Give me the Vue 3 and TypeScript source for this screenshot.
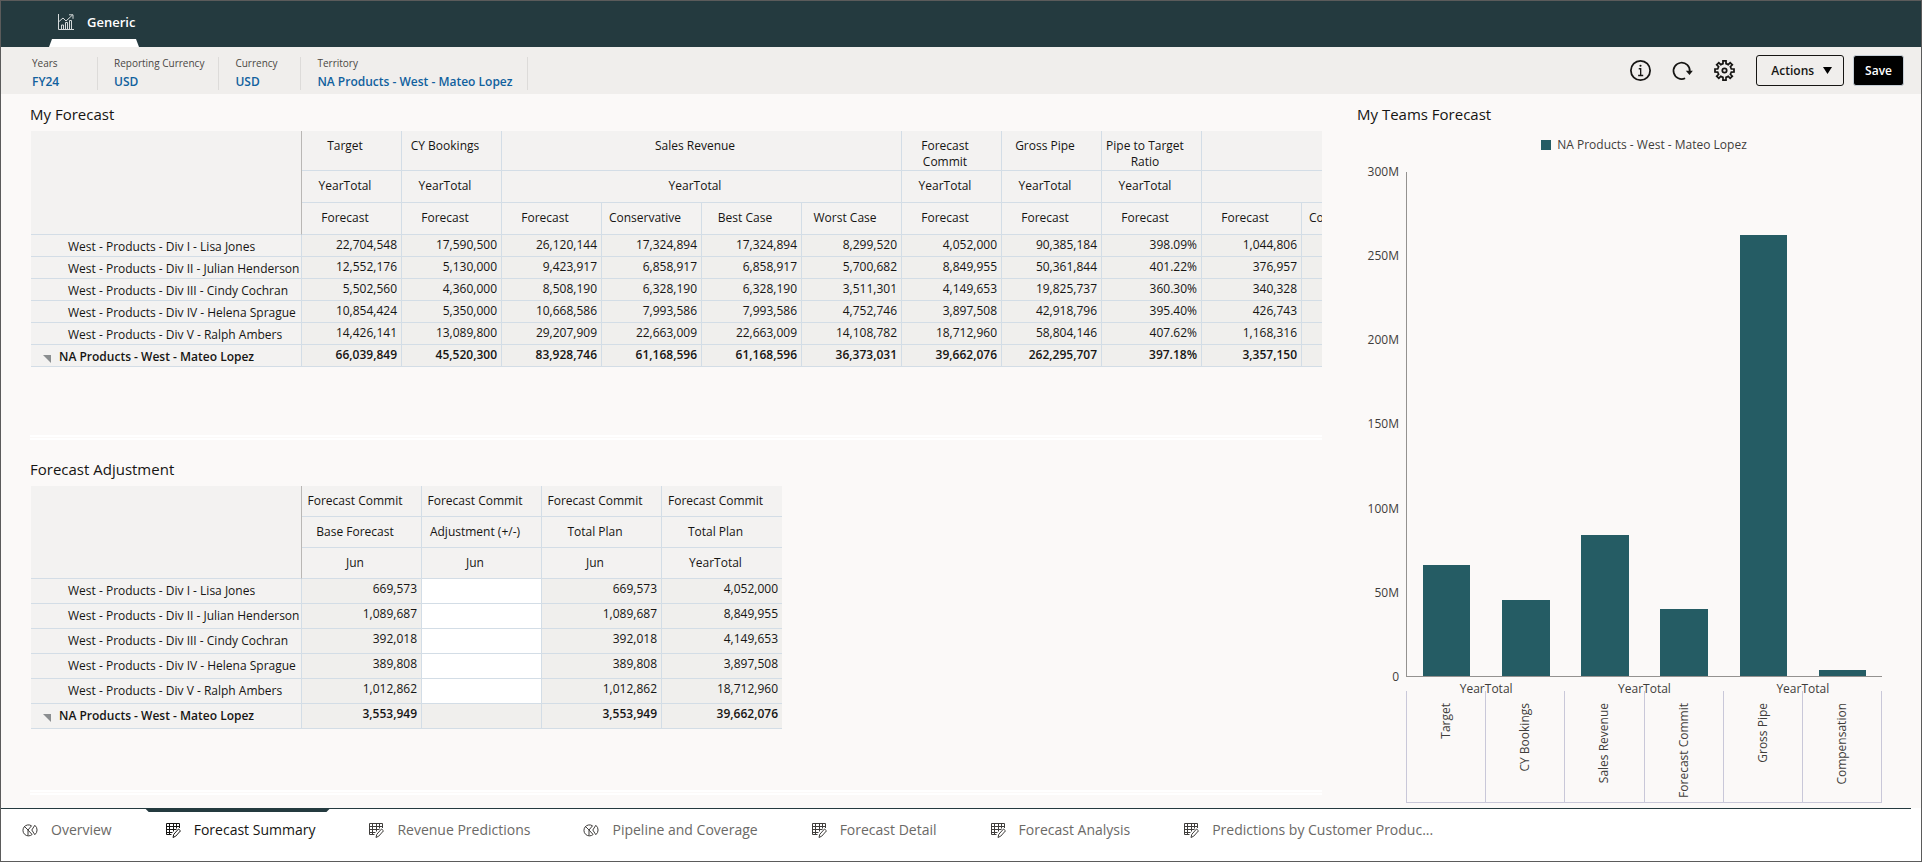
<script setup lang="ts">
import { ref } from 'vue'

interface Head { text: string; span?: number }
interface Row { label: string; values: string[]; total?: boolean }

const pov = [
  { id: 'years', label: 'Years', value: 'FY24' },
  { id: 'reporting', label: 'Reporting Currency', value: 'USD' },
  { id: 'currency', label: 'Currency', value: 'USD' },
  { id: 'territory', label: 'Territory', value: 'NA Products - West - Mateo Lopez' }
]

const forecastHeads: Head[][] = [
  [
    { text: 'Target' }, { text: 'CY Bookings' }, { text: 'Sales Revenue', span: 4 }, { text: 'Forecast Commit' },
    { text: 'Gross Pipe' }, { text: 'Pipe to Target Ratio' }, { text: '', span: 2 }
  ],
  [
    { text: 'YearTotal' }, { text: 'YearTotal' }, { text: 'YearTotal', span: 4 }, { text: 'YearTotal' },
    { text: 'YearTotal' }, { text: 'YearTotal' }, { text: '', span: 2 }
  ],
  ['Forecast', 'Forecast', 'Forecast', 'Conservative', 'Best Case', 'Worst Case', 'Forecast', 'Forecast', 'Forecast', 'Forecast', 'Conservative']
    .map(text => ({ text }))
]

const forecastRows: Row[] = [
  { label: 'West - Products - Div I - Lisa Jones', values: ['22,704,548', '17,590,500', '26,120,144', '17,324,894', '17,324,894', '8,299,520', '4,052,000', '90,385,184', '398.09%', '1,044,806', ''] },
  { label: 'West - Products - Div II - Julian Henderson', values: ['12,552,176', '5,130,000', '9,423,917', '6,858,917', '6,858,917', '5,700,682', '8,849,955', '50,361,844', '401.22%', '376,957', ''] },
  { label: 'West - Products - Div III - Cindy Cochran', values: ['5,502,560', '4,360,000', '8,508,190', '6,328,190', '6,328,190', '3,511,301', '4,149,653', '19,825,737', '360.30%', '340,328', ''] },
  { label: 'West - Products - Div IV - Helena Sprague', values: ['10,854,424', '5,350,000', '10,668,586', '7,993,586', '7,993,586', '4,752,746', '3,897,508', '42,918,796', '395.40%', '426,743', ''] },
  { label: 'West - Products - Div V - Ralph Ambers', values: ['14,426,141', '13,089,800', '29,207,909', '22,663,009', '22,663,009', '14,108,782', '18,712,960', '58,804,146', '407.62%', '1,168,316', ''] },
  { label: 'NA Products - West - Mateo Lopez', total: true, values: ['66,039,849', '45,520,300', '83,928,746', '61,168,596', '61,168,596', '36,373,031', '39,662,076', '262,295,707', '397.18%', '3,357,150', ''] }
]

const adjustHeads: string[][] = [
  ['Forecast Commit', 'Forecast Commit', 'Forecast Commit', 'Forecast Commit'],
  ['Base Forecast', 'Adjustment (+/-)', 'Total Plan', 'Total Plan'],
  ['Jun', 'Jun', 'Jun', 'YearTotal']
]

const adjustRows: Row[] = [
  { label: 'West - Products - Div I - Lisa Jones', values: ['669,573', '', '669,573', '4,052,000'] },
  { label: 'West - Products - Div II - Julian Henderson', values: ['1,089,687', '', '1,089,687', '8,849,955'] },
  { label: 'West - Products - Div III - Cindy Cochran', values: ['392,018', '', '392,018', '4,149,653'] },
  { label: 'West - Products - Div IV - Helena Sprague', values: ['389,808', '', '389,808', '3,897,508'] },
  { label: 'West - Products - Div V - Ralph Ambers', values: ['1,012,862', '', '1,012,862', '18,712,960'] },
  { label: 'NA Products - West - Mateo Lopez', total: true, values: ['3,553,949', '', '3,553,949', '39,662,076'] }
]
const adjustments = ref<string[]>(adjustRows.map(() => ''))

const axisMax = 300
const ticks = ['300M', '250M', '200M', '150M', '100M', '50M', '0']
const bars = [
  { name: 'Target', value: 66.04 },
  { name: 'CY Bookings', value: 45.52 },
  { name: 'Sales Revenue', value: 83.93 },
  { name: 'Forecast Commit', value: 39.66 },
  { name: 'Gross Pipe', value: 262.3 },
  { name: 'Compensation', value: 3.36 }
]
const periods = ['YearTotal', 'YearTotal', 'YearTotal']

const tabs = [
  { text: 'Overview', icon: 'pie' },
  { text: 'Forecast Summary', icon: 'grid' },
  { text: 'Revenue Predictions', icon: 'grid' },
  { text: 'Pipeline and Coverage', icon: 'pie' },
  { text: 'Forecast Detail', icon: 'grid' },
  { text: 'Forecast Analysis', icon: 'grid' },
  { text: 'Predictions by Customer Produc...', icon: 'grid' }
]
const activeTab = ref('Forecast Summary')

function gearPath(teeth: number, outer: number, root: number): string {
  const step = (Math.PI * 2) / teeth
  const points: string[] = []
  for (let i = 0; i < teeth; i++) {
    const mid = i * step - Math.PI / 2
    const corners: [number, number][] = [[-0.28, root], [-0.2, outer], [0.2, outer], [0.28, root]]
    for (const [turn, radius] of corners) {
      const angle = mid + turn * step
      points.push(`${(12 + radius * Math.cos(angle)).toFixed(2)} ${(12 + radius * Math.sin(angle)).toFixed(2)}`)
    }
  }
  return `M${points.join('L')}Z`
}
const gear = gearPath(8, 11, 8)
</script>

<template>
  <div class="page">
    <header class="topbar">
      <a class="cluster" href="#generic">
        <svg class="cluster-icon" viewBox="0 0 16 16" aria-hidden="true">
          <path d="M.5 0v15.5H16M3.5 15V11h2v4M7.5 15V8.500h2V15M11.500 15V6.500h2V15M1 7.500l4-3.500 3 3 6.500-6M11 .8h4v4" />
        </svg>
        <span>Generic</span>
      </a>
    </header>

    <div class="toolbar">
      <div class="pov">
        <div v-for="p in pov" :key="p.id" class="pov-item">
          <span :id="p.id" class="pov-label">{{ p.label }}</span>
          <button type="button" class="pov-value" :aria-describedby="p.id">{{ p.value }}</button>
        </div>
      </div>
      <div class="tools">
        <button type="button" class="icon-button" aria-label="Information">
          <svg viewBox="0 0 24 24"><circle cx="12" cy="12" r="11" /><path class="thin" d="M10 10h2.200v7.500M9.300 17.700h5.800" /><circle class="solid" cx="12" cy="6.500" r="1.200" /></svg>
        </button>
        <button type="button" class="icon-button" aria-label="Refresh">
          <svg viewBox="0 0 24 24"><path d="M15 20.800A9.300 9.300 0 1 1 20.300 13" /><path class="solid" d="M15.800 12.200h8l-3.800 5z" /></svg>
        </button>
        <button type="button" class="icon-button" aria-label="Settings">
          <svg viewBox="0 0 24 24"><path :d="gear" /><circle cx="12" cy="12" r="2.500" /></svg>
        </button>
        <button type="button" class="actions">
          Actions
          <svg viewBox="0 0 9 7" aria-hidden="true"><path d="M0 0h9L4.500 7z" /></svg>
        </button>
        <button type="button" class="save">Save</button>
      </div>
    </div>

    <main class="main">
      <div class="left">
        <section class="panel">
          <h2>My Forecast</h2>
          <div class="sheet">
            <table class="grid forecast">
              <colgroup><col class="label-col"><col v-for="n in 11" :key="n"></colgroup>
              <thead>
                <tr v-for="(heads, i) in forecastHeads" :key="i" :class="{ tall: i === 0 }">
                  <td v-if="i === 0" class="corner" rowspan="3"></td>
                  <th v-for="(h, j) in heads" :key="j" scope="col" :colspan="h.span ?? 1">{{ h.text }}</th>
                </tr>
              </thead>
              <tbody>
                <tr v-for="r in forecastRows" :key="r.label" :class="{ total: r.total }">
                  <th scope="row">
                    <button v-if="r.total" type="button" class="toggle" aria-label="Collapse"><svg viewBox="0 0 8 8"><path d="M0 0h8v8z" /></svg></button>{{ r.label }}
                  </th>
                  <td v-for="(v, j) in r.values" :key="j">{{ v }}</td>
                </tr>
              </tbody>
            </table>
          </div>
          <div class="divider"></div>
        </section>

        <section class="panel">
          <h2>Forecast Adjustment</h2>
          <div class="sheet">
            <table class="grid adjust">
              <colgroup><col class="label-col"><col v-for="n in 4" :key="n"></colgroup>
              <thead>
                <tr v-for="(heads, i) in adjustHeads" :key="i">
                  <td v-if="i === 0" class="corner" rowspan="3"></td>
                  <th v-for="(h, j) in heads" :key="j" scope="col">{{ h }}</th>
                </tr>
              </thead>
              <tbody>
                <tr v-for="(r, i) in adjustRows" :key="r.label" :class="{ total: r.total }">
                  <th scope="row">
                    <button v-if="r.total" type="button" class="toggle" aria-label="Collapse"><svg viewBox="0 0 8 8"><path d="M0 0h8v8z" /></svg></button>{{ r.label }}
                  </th>
                  <td v-for="(v, j) in r.values" :key="j" :class="{ entry: j === 1 && !r.total }">
                    <input v-if="j === 1 && !r.total" v-model="adjustments[i]" type="text" :aria-label="r.label">
                    <template v-else>{{ v }}</template>
                  </td>
                </tr>
              </tbody>
            </table>
          </div>
          <div class="divider"></div>
        </section>
      </div>

      <section class="chart">
        <h2>My Teams Forecast</h2>
        <div class="legend"><span class="swatch"></span>NA Products - West - Mateo Lopez</div>
        <div class="plot-row">
          <div class="ticks"><span v-for="t in ticks" :key="t">{{ t }}</span></div>
          <div class="plot">
            <div v-for="b in bars" :key="b.name" class="slot">
              <div class="bar" :style="{ height: (b.value / axisMax) * 100 + '%' }"></div>
            </div>
          </div>
        </div>
        <div class="categories">
          <div class="periods"><span v-for="(p, i) in periods" :key="i">{{ p }}</span></div>
          <div v-for="b in bars" :key="b.name" class="category"><span>{{ b.name }}</span></div>
        </div>
      </section>
    </main>

    <nav class="tabs" aria-label="Pages">
      <a v-for="t in tabs" :key="t.text" href="#" :class="{ active: t.text === activeTab }" @click.prevent="activeTab = t.text">
        <svg v-if="t.icon === 'pie'" viewBox="0 0 16 16" aria-hidden="true">
          <path d="M9.500 3.800a5.500 5.500 0 1 0 .6 8.700M6 8L2.200 4.200M6 8l3.500-4.200M6 8v5.700M6 8l4.100 4.500M12.800 3.300a6 6 0 0 1 0 9.400L9.800 8z" />
        </svg>
        <svg v-else viewBox="0 0 16 16" aria-hidden="true">
          <path d="M6.500 12.500h-5v-11h13V6M1.500 4.500h13M1.500 7.500h10M1.500 10.500h6M4.500 1.500v11M8.500 1.500v8M11.500 1.500v5" />
          <path d="M8 15.500l.8-3.200 4.700-5.300 2 1.800-4.700 5.300z" />
        </svg>
        <span>{{ t.text }}</span>
      </a>
    </nav>
  </div>
</template>

<style>
body {
  margin: 0;
}
</style>

<style scoped>
* {
  box-sizing: border-box;
}

.page {
  display: flex;
  flex-direction: column;
  min-height: 100vh;
  border: 1px solid #5b5b5b;
  background: #fbf9f8;
  color: #161513;
  font-family: "Open Sans", "Noto Sans", sans-serif;
  font-size: 12px;
  line-height: 16px;
}

button {
  font: inherit;
  color: inherit;
  cursor: pointer;
}

a {
  color: inherit;
  text-decoration: none;
}

.topbar {
  display: flex;
  height: 46px;
  padding-left: 48px;
  background: #243a3f;
}

.cluster {
  position: relative;
  display: flex;
  align-items: center;
  gap: 13px;
  width: 90px;
  padding: 0 0 4px 9px;
  color: #fff;
  font-size: 13px;
  font-weight: 600;
}

.cluster::after {
  content: "";
  position: absolute;
  inset: auto 0 0;
  height: 8px;
  background: #fff;
  clip-path: polygon(3px 0, calc(100% - 3px) 0, 100% 100%, 0 100%);
}

.cluster-icon {
  flex: none;
  width: 16px;
  height: 16px;
  fill: none;
  stroke: #d5dadb;
}

.toolbar {
  display: flex;
  justify-content: space-between;
  height: 47px;
  padding: 0 17px 0 15px;
  background: #f0eeec;
}

.pov {
  display: flex;
  padding-top: 10px;
}

.pov-item {
  display: flex;
  flex-direction: column;
  align-items: flex-start;
  gap: 5px;
  min-width: 82px;
  height: 33px;
  padding: 0 14px 0 16px;
  border-right: 1px solid #dddbd9;
}

.pov-label {
  color: #4a4744;
  font-size: 10px;
  line-height: 12px;
}

.pov-value {
  padding: 0;
  border: 0;
  background: none;
  color: #11619e;
  font-weight: 600;
  white-space: nowrap;
}

.tools {
  display: flex;
  align-items: center;
}

.icon-button {
  width: 21px;
  height: 21px;
  margin-right: 21px;
  padding: 0;
  border: 0;
  background: none;
}

.icon-button svg {
  display: block;
  width: 21px;
  height: 21px;
  overflow: visible;
  fill: none;
  stroke: #161513;
  stroke-width: 2;
}

.icon-button .thin {
  stroke-width: 1.5;
}

.icon-button .solid {
  fill: #161513;
  stroke: none;
}

.actions,
.save {
  height: 31px;
  border: 1px solid #161513;
  border-radius: 3px;
  font-weight: 600;
}

.actions {
  display: flex;
  align-items: center;
  gap: 9px;
  margin-right: 9px;
  padding: 0 11px 0 14px;
  background: #f0eeec;
}

.actions svg {
  width: 9px;
  height: 7px;
}

.save {
  padding: 0 11px;
  border-color: #c5ced6;
  background: #000;
  color: #fff;
}

.main {
  display: grid;
  flex: 1;
  grid-template-columns: minmax(0, 1354fr) minmax(0, 566fr);
}

.left {
  display: flex;
  flex-direction: column;
  padding: 0 33px 4px 29px;
}

.panel {
  display: flex;
  flex: 1;
  flex-direction: column;
  padding-bottom: 9px;
}

h2 {
  height: 37px;
  margin: 0;
  padding-top: 10px;
  font-size: 15px;
  font-weight: 400;
  line-height: 20px;
}

.sheet {
  flex: 1;
  margin-left: 1px;
  overflow: hidden;
}

.divider {
  height: 5px;
  border: solid #fff;
  border-width: 2px 0;
}

.grid {
  width: 0;
  border-spacing: 0;
  table-layout: fixed;
}

.grid col {
  width: 100px;
}

.adjust col {
  width: 120px;
}

.grid .label-col {
  width: 271px;
}

.grid th,
.grid td {
  border: solid #d3dde6;
  border-width: 0 1px 1px 0;
  font-weight: 400;
  vertical-align: top;
}

.grid .corner {
  border-right-color: #b9b7b5;
  background: #f3f2f1;
}

.grid thead th {
  height: 32px;
  padding: 7px 15px 0 2px;
  background: #f3f2f1;
  text-align: center;
}

.grid .tall th {
  height: 40px;
}

.adjust thead th {
  height: 31px;
}

.grid tbody th {
  height: 22px;
  padding: 4px 0 0 37px;
  background: #f3f2f1;
  text-align: left;
  white-space: nowrap;
}

.grid tbody td {
  padding: 2px 4px 0 0;
  background: #f0efed;
  text-align: right;
}

.adjust tbody th {
  height: 25px;
}

.grid .total th,
.grid .total td {
  font-weight: 600;
}

.grid .total th {
  padding-left: 12px;
}

.adjust tr > :last-child {
  border-right: 0;
}

.adjust tbody .entry {
  padding: 0;
  background: #fff;
}

.entry input {
  display: block;
  width: 100%;
  height: 24px;
  padding: 0 4px;
  border: 0;
  background: #fff;
  font: inherit;
  text-align: right;
}

.toggle {
  width: 8px;
  height: 8px;
  margin-right: 8px;
  padding: 0;
  border: 0;
  background: none;
  vertical-align: -2px;
}

.toggle svg {
  display: block;
  width: 8px;
  height: 8px;
  fill: #8b8e90;
}

.chart {
  display: flex;
  flex-direction: column;
  padding: 0 39px 5px 0;
  color: #3f3d3b;
}

.chart h2 {
  padding-left: 2px;
  color: #161513;
}

.legend {
  display: flex;
  justify-content: center;
  align-items: center;
  gap: 6px;
  height: 41px;
  padding: 0 0 13px 51px;
}

.swatch {
  width: 10px;
  height: 10px;
  background: #255c64;
}

.plot-row {
  display: flex;
  flex: 1;
}

.ticks {
  display: flex;
  flex-direction: column;
  justify-content: space-between;
  width: 51px;
  padding-right: 7px;
  text-align: right;
}

.ticks span {
  height: 0;
  line-height: 0;
}

.plot {
  display: flex;
  flex: 1;
  border: solid #949290;
  border-width: 0 0 1px 1px;
}

.slot {
  display: flex;
  flex: 1;
  justify-content: center;
  align-items: flex-end;
}

.bar {
  width: 60%;
  background: #255c64;
}

.categories {
  position: relative;
  display: flex;
  height: 112px;
  margin: 14px 0 0 51px;
  border: solid #c9c8d9;
  border-width: 0 0 1px 1px;
}

.periods {
  position: absolute;
  inset: -10px 0 auto;
  display: flex;
}

.periods span {
  flex: 1;
  text-align: center;
}

.category {
  display: flex;
  flex: 1;
  justify-content: center;
  padding-top: 12px;
  border-right: 1px solid #c9c8d9;
}

.category span {
  align-self: flex-start;
  writing-mode: vertical-rl;
  transform: rotate(180deg);
}

.tabs {
  display: flex;
  gap: 53px;
  height: 53px;
  padding-left: 21px;
  background: linear-gradient(#243a3f, #243a3f) 0 0 / calc(100% - 10px) 1px no-repeat #fff;
  color: #6b6966;
  font-size: 14px;
  line-height: 20px;
}

.tabs a {
  position: relative;
  display: flex;
  align-items: flex-start;
  gap: 13px;
  padding-top: 12px;
  white-space: nowrap;
}

.tabs svg {
  width: 16px;
  height: 16px;
  margin-top: 2px;
  fill: none;
  stroke: #3f3d3b;
}

.tabs .active {
  color: #161513;
}

.tabs .active svg {
  stroke: #161513;
}

.tabs .active::before {
  content: "";
  position: absolute;
  inset: 0 -15px auto -20px;
  height: 4px;
  background: #243a3f;
  clip-path: polygon(0 0, 100% 0, calc(100% - 4px) 100%, 4px 100%);
}
</style>
